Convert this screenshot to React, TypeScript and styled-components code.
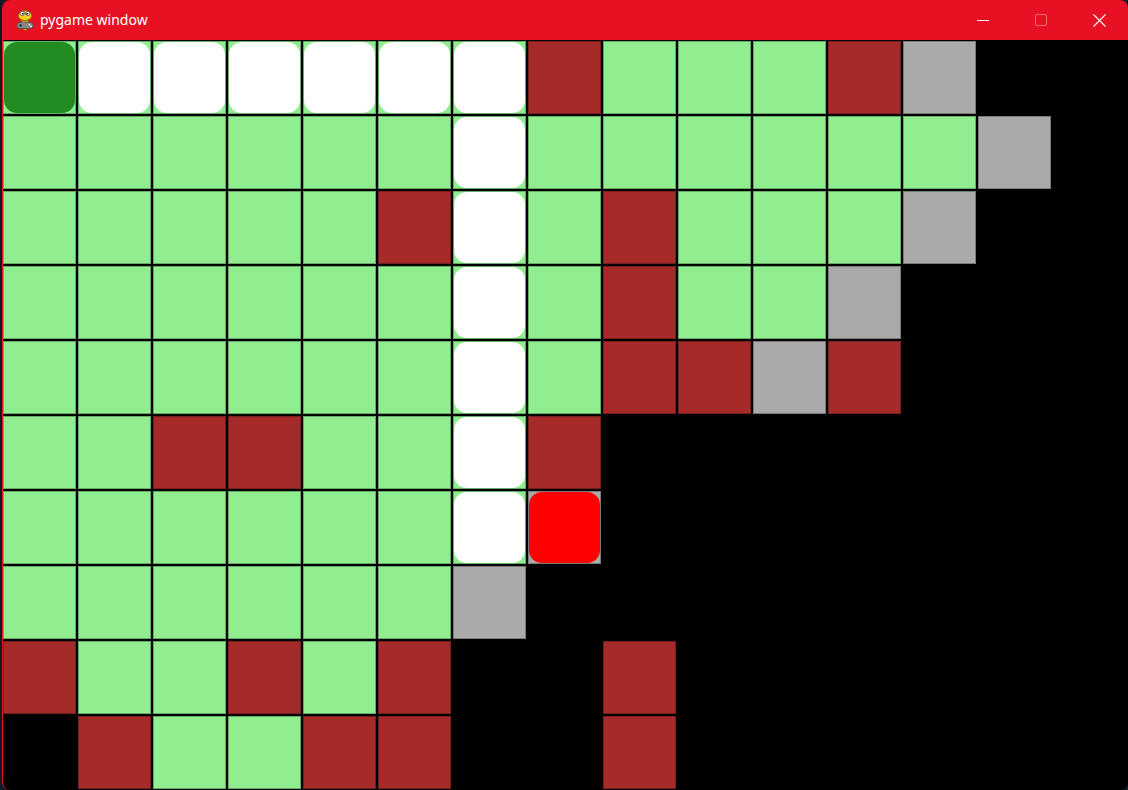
import styled, {createGlobalStyle} from "styled-components";

const GlobalStyle = createGlobalStyle`
    html, body {
        margin: 0;
        padding: 0;
        background: #0d1b29;
        overflow: hidden;
    }
`

type Kind = 'grass' | 'wall' | 'gray' | 'none' | 'path' | 'start' | 'end'

// g grass, w wall, x gray (visited), . empty, p path, s start, e end (on gray)
const MAP = [
  'sppppppwgggwx..',
  'ggggggpggggggx.',
  'gggggwpgwgggx..',
  'ggggggpgwggx...',
  'ggggggpgwwxw...',
  'ggwwggpw.......',
  'ggggggpe.......',
  'ggggggx........',
  'wggwgw..w......',
  '.wggww..w......',
]

const kindOf = (ch: string): Kind => {
  switch (ch) {
    case 'g': return 'grass'
    case 'w': return 'wall'
    case 'x': return 'gray'
    case 'p': return 'path'
    case 's': return 'start'
    case 'e': return 'end'
    default: return 'none'
  }
}

const baseColor: Record<Kind, string> = {
  grass: '#90ee90',
  wall: '#a52a2a',
  gray: '#aaaaaa',
  none: 'transparent',
  path: '#90ee90',
  start: '#90ee90',
  end: '#aaaaaa',
}

const tileColor: Partial<Record<Kind, string>> = {
  path: '#ffffff',
  start: '#228b22',
  end: '#ff0000',
}

const StyledWindow = styled.div`
    margin-left: 2px;
    width: 1126px;
    height: 790px;
    border-left: 1px solid #e81123;
    border-radius: 8px;
    overflow: hidden;
    background: #000;
    display: flex;
    flex-direction: column;
    box-sizing: border-box;
`

const StyledTitleBar = styled.div`
    height: 40px;
    flex: none;
    background: #e81123;
    display: flex;
    flex-direction: row;
    align-items: center;
    color: #fff;
    font-family: "Noto Sans", "Open Sans", sans-serif;
    font-size: 14px;
`

const StyledTitle = styled.div`
    display: flex;
    align-items: center;
    gap: 3px;
    padding-left: 10px;
    flex: 1;

    span {
        margin-top: -1px;
    }
`

const StyledControl = styled.div<{ $dim?: boolean }>`
    width: 58px;
    height: 40px;
    display: flex;
    align-items: center;
    justify-content: center;
    opacity: ${p => p.$dim ? 0.35 : 1};
`

const StyledBoard = styled.div`
    flex: 1;
    padding-top: 1px;
    display: grid;
    grid-template-columns: repeat(15, 73px);
    grid-auto-rows: 73px;
    gap: 2px;
`

const StyledCell = styled.div<{ $kind: Kind }>`
    background: ${p => baseColor[p.$kind]};
    box-shadow: ${p => p.$kind === 'none' ? 'none' : 'inset 0 0 0 1px rgba(0, 0, 0, 0.28)'};
    display: flex;
`

const StyledTile = styled.div<{ $color: string }>`
    flex: 1;
    margin: 1px;
    background: ${p => p.$color};
    border-radius: 13px;
`

const PygameIcon = () => (
  <svg width="24" height="24" viewBox="0 0 22 22">
    <ellipse cx="11" cy="7" rx="6" ry="4.5" fill="#f2d21b" stroke="#8a7400" strokeWidth="0.8"/>
    <circle cx="8.5" cy="5" r="2" fill="#fff" stroke="#333" strokeWidth="0.6"/>
    <circle cx="13.5" cy="5" r="2" fill="#fff" stroke="#333" strokeWidth="0.6"/>
    <circle cx="9" cy="5.2" r="0.8" fill="#000"/>
    <circle cx="13" cy="5.2" r="0.8" fill="#000"/>
    <path d="M8 11 Q11 13 14 11 L14 14 Q11 16 8 14 Z" fill="#f2d21b" stroke="#8a7400" strokeWidth="0.6"/>
    <rect x="3.5" y="13" width="15" height="6" rx="3" fill="#888" stroke="#444" strokeWidth="0.7"/>
    <circle cx="7" cy="16" r="1.2" fill="#333"/>
    <circle cx="15" cy="15.3" r="0.8" fill="#eee"/>
    <circle cx="16.5" cy="16.8" r="0.8" fill="#eee"/>
    <path d="M9 19.5 Q11 21.5 13 19.5" fill="#f2d21b" stroke="#8a7400" strokeWidth="0.6"/>
  </svg>
)

const App = () => {
  return (
    <>
      <GlobalStyle/>
      <StyledWindow>
        <StyledTitleBar>
          <StyledTitle>
            <PygameIcon/>
            <span>pygame window</span>
          </StyledTitle>
          <StyledControl>
            <svg width="12" height="12" viewBox="0 0 12 12">
              <line x1="0" y1="6.5" x2="12" y2="6.5" stroke="#fff" strokeWidth="1"/>
            </svg>
          </StyledControl>
          <StyledControl $dim>
            <svg width="12" height="12" viewBox="0 0 12 12">
              <rect x="0.5" y="0.5" width="11" height="11" rx="1.5" fill="none" stroke="#fff" strokeWidth="1"/>
            </svg>
          </StyledControl>
          <StyledControl>
            <svg width="13" height="13" viewBox="0 0 13 13">
              <path d="M0.5 0.5 L12.5 12.5 M12.5 0.5 L0.5 12.5" stroke="#fff" strokeWidth="1.1"/>
            </svg>
          </StyledControl>
        </StyledTitleBar>
        <StyledBoard>
          {MAP.flatMap((row, r) =>
            row.split('').map((ch, c) => {
              const kind = kindOf(ch)
              const tile = tileColor[kind]
              return (
                <StyledCell key={`${r}-${c}`} $kind={kind}>
                  {tile && <StyledTile $color={tile}/>}
                </StyledCell>
              )
            })
          )}
        </StyledBoard>
      </StyledWindow>
    </>
  );
};

export default App;
